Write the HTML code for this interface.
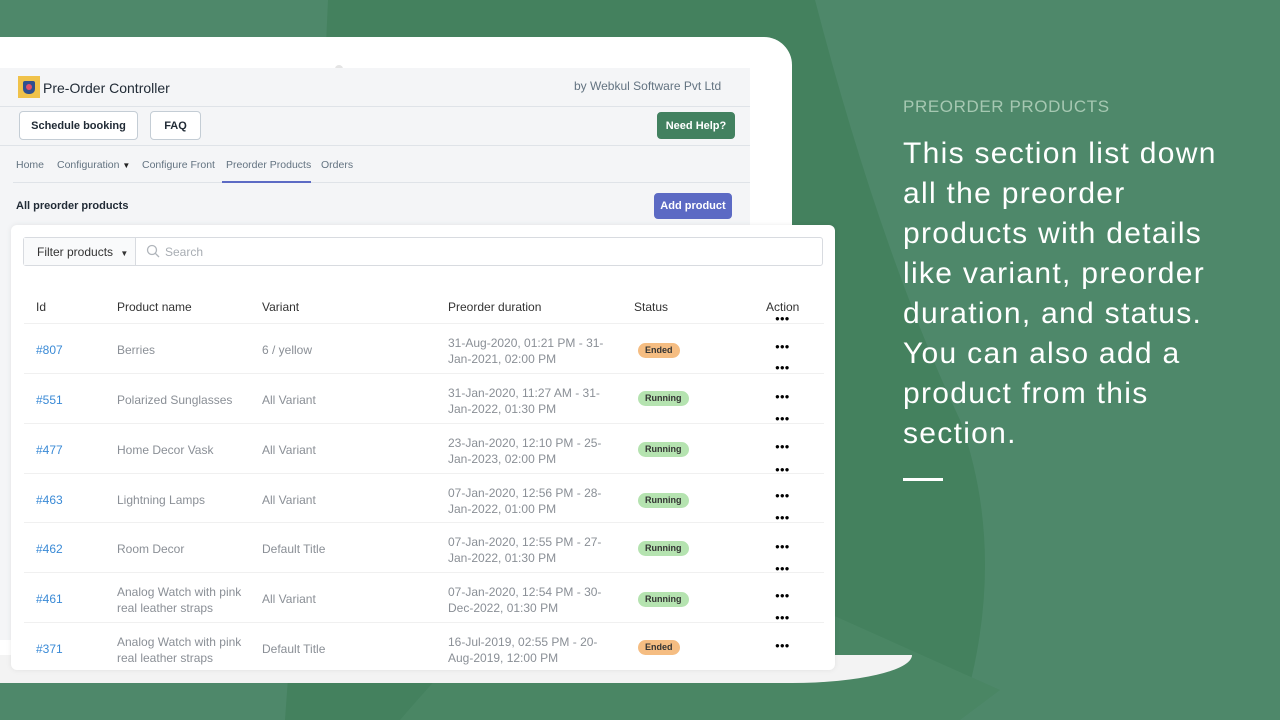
<!DOCTYPE html>
<html><head><meta charset="utf-8"><style>
*{margin:0;padding:0;box-sizing:border-box}
body{width:1280px;height:720px;overflow:hidden;position:relative;background:#44815e;font-family:"Liberation Sans",sans-serif}
.abs{position:absolute}
.screen{left:0;top:68px;width:750px;height:572px;background:#f4f5f7}
.btn{position:absolute;border:1px solid #c4cdd5;background:#fff;border-radius:4px;font-size:11px;font-weight:bold;color:#212b36;display:flex;align-items:center;justify-content:center}
.nav{position:absolute;top:159px;font-size:10.5px;color:#637381}
.card{left:11px;top:225px;width:824px;height:445px;background:#fff;border-radius:6px;box-shadow:0 0 6px rgba(0,0,0,.08)}
.th{position:absolute;top:300px;font-size:12px;color:#333}
.row{position:absolute;left:24px;width:800px;height:50px;border-top:1px solid #f0f0f0;font-size:12px;color:#8a8f96}
.row span{position:absolute}
.id{left:12px;color:#3a8ad6}
.badge{position:absolute;left:614px;height:15px;border-radius:8px;font-size:9px;font-weight:bold;color:#333;padding:0 7px;line-height:15px}
.run{background:#b5e3b0}.end{background:#f5bd82}
.dots{position:absolute;left:751px;font-size:8px;color:#000;letter-spacing:0;line-height:10px}
.big{left:903px;top:134px;font-size:30px;line-height:40px;color:#fff;white-space:nowrap;letter-spacing:1.3px}
</style></head><body>
<svg class="abs" style="left:0;top:0" width="1280" height="720">
<path d="M0 0 H328 Q315 300 285 720 H0Z" fill="#4e886a"/>
<path d="M815 0 H1280 V720 H960 Q1010 560 960 420 Q880 250 815 0Z" fill="#4e886a"/>
<path d="M400 720 Q520 580 620 520 L1000 690 L960 720Z" fill="#4a8664"/>
</svg>
<div class="abs" style="left:0;top:37px;width:792px;height:646px;background:#fff;border-radius:0 28px 0 0"></div>
<div class="abs" style="left:0;top:655px;width:912px;height:28px;background:#f3f3f3;border-radius:0 0 120px 0/0 0 28px 0"></div>
<div class="abs" style="left:335px;top:65px;width:8px;height:8px;border-radius:50%;background:#e4e4e4"></div>
<div class="abs screen"></div>
<div class="abs" style="left:18px;top:76px;width:22px;height:22px;background:#f0c24a"><div style="margin:5px 5px 0;width:12px;height:13px;background:#2f4f8f;border-radius:2px 2px 5px 5px"><div style="margin:3px auto 0;width:6px;height:6px;border-radius:50%;background:#e0506a;position:relative;top:3px"></div></div></div>
<div class="abs" style="left:43px;top:80px;font-size:14px;color:#212b36">Pre-Order Controller</div>
<div class="abs" style="left:574px;top:79px;font-size:12px;color:#637381">by Webkul Software Pvt Ltd</div>
<div class="abs" style="left:0;top:106px;width:750px;height:1px;background:#dfe3e8"></div>
<div class="btn" style="left:19px;top:111px;width:119px;height:29px">Schedule booking</div>
<div class="btn" style="left:150px;top:111px;width:51px;height:29px">FAQ</div>
<div class="btn" style="left:657px;top:112px;width:78px;height:27px;background:#428160;border-color:#428160;color:#fff">Need Help?</div>
<div class="abs" style="left:0;top:145px;width:750px;height:1px;background:#dfe3e8"></div>
<div class="nav" style="left:16px">Home</div>
<div class="nav" style="left:57px">Configuration <span style="color:#222;font-size:8px">▼</span></div>
<div class="nav" style="left:142px">Configure Front</div>
<div class="nav" style="left:226px">Preorder Products</div>
<div class="nav" style="left:321px">Orders</div>
<div class="abs" style="left:13px;top:182px;width:737px;height:1px;background:#dfe3e8"></div>
<div class="abs" style="left:222px;top:181px;width:89px;height:2px;background:#5c6ac4"></div>
<div class="abs" style="left:16px;top:200px;font-size:11px;font-weight:bold;color:#212b36">All preorder products</div>
<div class="btn" style="left:654px;top:193px;width:78px;height:26px;background:#5c6ac4;border-color:#5c6ac4;color:#fff">Add product</div>
<div class="abs card"></div>
<div class="abs" style="left:23px;top:237px;width:800px;height:29px;border:1px solid #d8dbe0;border-radius:3px"></div>
<div class="abs" style="left:24px;top:238px;width:112px;height:27px;background:#f9fafb;border-right:1px solid #d8dbe0;font-size:12px;color:#333;padding:7px 0 0 13px">Filter products <span style="font-size:8px;margin-left:4px">▼</span></div>
<svg class="abs" style="left:146px;top:244px" width="14" height="14"><circle cx="6" cy="6" r="4.5" fill="none" stroke="#b0b5bb" stroke-width="1.3"/><path d="M9.3 9.3L13 13" stroke="#b0b5bb" stroke-width="1.3"/></svg>
<div class="abs" style="left:165px;top:245px;font-size:12px;color:#a8adb3">Search</div>
<div class="th" style="left:36px">Id</div>
<div class="th" style="left:117px">Product name</div>
<div class="th" style="left:262px">Variant</div>
<div class="th" style="left:448px">Preorder duration</div>
<div class="th" style="left:634px">Status</div>
<div class="th" style="left:766px">Action</div>
<div class="dots" style="top:314px;left:775px">●●●</div>

<div class="row" style="top:323px"><span class="id" style="top:19px">#807</span><span style="left:93px;top:19px">Berries</span><span style="left:238px;top:19px">6 / yellow</span><span style="left:424px;top:11px;line-height:16px">31-Aug-2020, 01:21 PM - 31-<br>Jan-2021, 02:00 PM</span><span class="badge end" style="top:19px">Ended</span><span class="dots" style="top:18px">●●●</span><span class="dots" style="top:39px">●●●</span></div>
<div class="row" style="top:373px"><span class="id" style="top:19px">#551</span><span style="left:93px;top:19px">Polarized Sunglasses</span><span style="left:238px;top:19px">All Variant</span><span style="left:424px;top:11px;line-height:16px">31-Jan-2020, 11:27 AM - 31-<br>Jan-2022, 01:30 PM</span><span class="badge run" style="top:17px">Running</span><span class="dots" style="top:18px">●●●</span><span class="dots" style="top:40px">●●●</span></div>
<div class="row" style="top:423px"><span class="id" style="top:19px">#477</span><span style="left:93px;top:19px">Home Decor Vask</span><span style="left:238px;top:19px">All Variant</span><span style="left:424px;top:11px;line-height:16px">23-Jan-2020, 12:10 PM - 25-<br>Jan-2023, 02:00 PM</span><span class="badge run" style="top:18px">Running</span><span class="dots" style="top:18px">●●●</span><span class="dots" style="top:41px">●●●</span></div>
<div class="row" style="top:473px"><span class="id" style="top:19px">#463</span><span style="left:93px;top:19px">Lightning Lamps</span><span style="left:238px;top:19px">All Variant</span><span style="left:424px;top:11px;line-height:16px">07-Jan-2020, 12:56 PM - 28-<br>Jan-2022, 01:00 PM</span><span class="badge run" style="top:19px">Running</span><span class="dots" style="top:17px">●●●</span><span class="dots" style="top:39px">●●●</span></div>
<div class="row" style="top:522px"><span class="id" style="top:19px">#462</span><span style="left:93px;top:19px">Room Decor</span><span style="left:238px;top:19px">Default Title</span><span style="left:424px;top:11px;line-height:16px">07-Jan-2020, 12:55 PM - 27-<br>Jan-2022, 01:30 PM</span><span class="badge run" style="top:18px">Running</span><span class="dots" style="top:19px">●●●</span><span class="dots" style="top:41px">●●●</span></div>
<div class="row" style="top:572px"><span class="id" style="top:19px">#461</span><span style="left:93px;top:11px;line-height:16px">Analog Watch with pink<br>real leather straps</span><span style="left:238px;top:19px">All Variant</span><span style="left:424px;top:11px;line-height:16px">07-Jan-2020, 12:54 PM - 30-<br>Dec-2022, 01:30 PM</span><span class="badge run" style="top:19px">Running</span><span class="dots" style="top:18px">●●●</span><span class="dots" style="top:40px">●●●</span></div>
<div class="row" style="top:622px"><span class="id" style="top:19px">#371</span><span style="left:93px;top:11px;line-height:16px">Analog Watch with pink<br>real leather straps</span><span style="left:238px;top:19px">Default Title</span><span style="left:424px;top:11px;line-height:16px">16-Jul-2019, 02:55 PM - 20-<br>Aug-2019, 12:00 PM</span><span class="badge end" style="top:17px">Ended</span><span class="dots" style="top:18px">●●●</span></div>

<div class="abs" style="left:903px;top:97px;font-size:17px;color:#a6c8b2;letter-spacing:0.6px">PREORDER PRODUCTS</div>
<div class="abs big">This section list down<br>all the preorder<br>products with details<br>like variant, preorder<br>duration, and status.<br>You can also add a<br>product from this<br>section.</div>
<div class="abs" style="left:903px;top:478px;width:40px;height:3px;background:#fff"></div>
</body></html>
